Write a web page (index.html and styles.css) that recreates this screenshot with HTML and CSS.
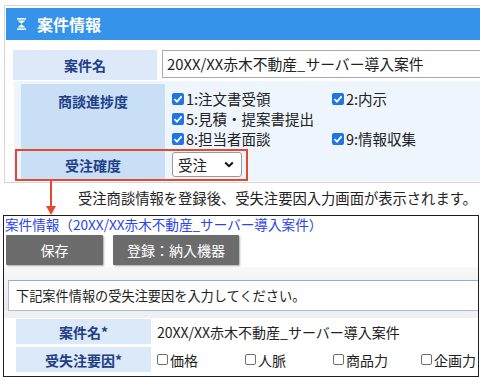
FILE: index.html
```html
<!DOCTYPE html>
<html lang="ja">
<head>
    <meta charset="UTF-8">
    <meta name="viewport" content="width=device-width, initial-scale=1.0">
    <title>受失注要因入力</title>
    <link rel="stylesheet" href="styles.css">
</head>
<body>

    <div class="case-panel">
        <div class="case-head">
            <svg class="collapse-icon" width="9" height="12" viewBox="0 0 9 12">
                <rect x="0" y="0" width="9" height="1.6" fill="#fff"/>
                <polygon points="0.5,2.6 8.5,2.6 4.5,5.8" fill="#fff"/>
                <polygon points="0.5,9.4 8.5,9.4 4.5,6.2" fill="#fff"/>
                <rect x="0" y="10.4" width="9" height="1.6" fill="#fff"/>
            </svg>
            <span>案件情報</span>
        </div>

        <div class="case-body">
            <div class="row row-name">
                <div class="label">案件名</div>
                <div class="text-input">20XX/XX赤木不動産_サーバー導入案件</div>
            </div>

            <div class="sub">
                <div class="row">
                    <div class="label label-dark label-top">商談進捗度</div>
                    <div class="checks">
                        <span class="check"><i class="box on"></i>1:注文書受領</span>
                        <span class="check"><i class="box on"></i>2:内示</span>
                        <span class="check wide"><i class="box on"></i>5:見積・提案書提出</span>
                        <span class="check"><i class="box on"></i>8:担当者面談</span>
                        <span class="check"><i class="box on"></i>9:情報収集</span>
                    </div>
                </div>
                <div class="row row-select">
                    <div class="label label-dark">受注確度</div>
                    <div class="select">
                        <span>受注</span>
                        <svg width="10" height="7" viewBox="0 0 10 7">
                            <polyline points="1.2,1.5 5,5.2 8.8,1.5" fill="none" stroke="#111" stroke-width="2"/>
                        </svg>
                    </div>
                </div>
            </div>
        </div>
    </div>

    <!-- annotation: highlight + arrow -->
    <div class="highlight"></div>
    <svg class="arrow" width="12" height="36" viewBox="0 0 12 36">
        <rect x="5" y="0" width="2" height="27" fill="#e2492f"/>
        <polygon points="1,25 11,25 6,34" fill="#e2492f"/>
    </svg>

    <p class="note">受注商談情報を登録後、受失注要因入力画面が表示されます。</p>

    <div class="loss-panel">
        <div class="loss-title">案件情報（20XX/XX赤木不動産_サーバー導入案件）</div>
        <div class="toolbar">
            <button class="tool-btn save-btn">保存</button>
            <button class="tool-btn">登録：納入機器</button>
        </div>
        <div class="loss-body">
            <div class="message">下記案件情報の受失注要因を入力してください。</div>
        </div>
        <div class="loss-gap"></div>
        <div class="loss-table">
            <div class="loss-row">
                <div class="loss-label">案件名*</div>
                <div class="loss-value">20XX/XX赤木不動産_サーバー導入案件</div>
            </div>
            <div class="loss-row">
                <div class="loss-label">受失注要因*</div>
                <div class="loss-value reasons">
                    <span class="reason"><i class="box off"></i>価格</span>
                    <span class="reason"><i class="box off"></i>人脈</span>
                    <span class="reason"><i class="box off"></i>商品力</span>
                    <span class="reason last"><i class="box off"></i>企画力</span>
                </div>
            </div>
        </div>
    </div>

</body>
</html>
```

FILE: styles.css
```css
body {
    margin: 0;
    width: 480px;
    height: 377px;
    overflow: hidden;
    background-color: #fff;
    font-family: "Noto Sans CJK JP", "Noto Sans", sans-serif;
    color: #222;
    position: relative;
}

/* top panel */
.case-panel {
    margin: 5px 0 0 4px;
    border: 1px solid #d6d6d6;
    border-right: none;
    padding: 2px 0 1px 1px;
}

.case-head {
    height: 32px;
    background-color: #3593ea;
    display: flex;
    align-items: center;
    color: #fff;
    font-size: 16px;
    font-weight: bold;
}

.collapse-icon {
    margin: 0 11px 0 11px;
}

.case-body {
    padding-top: 10px;
}

.row {
    display: flex;
}

.row-name {
    margin-left: 7px;
    height: 30px;
}

.label {
    flex: none;
    width: 144px;
    display: flex;
    align-items: center;
    justify-content: center;
    background-color: #dde9f8;
    color: #213e86;
    font-size: 14px;
    font-weight: bold;
}

.text-input {
    flex: 1;
    min-width: 0;
    margin-left: 5px;
    height: 28px;
    box-sizing: border-box;
    border: 1px solid #a9a9a9;
    border-right: none;
    padding-left: 4px;
    font-size: 14.8px;
    line-height: 26px;
    color: #222;
    background-color: #fff;
    white-space: nowrap;
    overflow: hidden;
}

.sub {
    margin: 1px 0 0 8px;
    padding: 3px 0 2px 7px;
    background-color: #eef5fd;
}

.label-dark {
    background-color: #c9dff6;
}

.label-top {
    align-items: flex-start;
    padding-top: 7px;
    height: 58px;
}

.checks {
    display: grid;
    grid-template-columns: 160px auto;
    padding: 5px 0 0 7px;
    font-size: 14.5px;
    line-height: 17.5px;
    color: #222;
}

.check {
    display: flex;
    align-items: center;
    white-space: nowrap;
}

.check.wide {
    grid-column: span 2;
}

.box {
    flex: none;
    width: 12px;
    height: 12px;
    box-sizing: border-box;
    border-radius: 2px;
    margin-right: 2px;
}

.box.on {
    background-color: #1f74e6;
    background-image: url("data:image/svg+xml,%3Csvg xmlns='http://www.w3.org/2000/svg' viewBox='0 0 12 12'%3E%3Cpolyline points='2.5,6.2 5,8.6 9.6,3.4' fill='none' stroke='white' stroke-width='1.8'/%3E%3C/svg%3E");
}

.box.off {
    width: 11px;
    height: 11px;
    border: 1px solid #6f6f6f;
    margin-right: 2px;
}

.row-select {
    margin-top: 1px;
    height: 29px;
    align-items: center;
}

.row-select .label {
    height: 29px;
}

.select {
    margin-left: 7px;
    width: 70px;
    height: 25px;
    box-sizing: border-box;
    border: 1px solid #9a9a9a;
    border-radius: 3px;
    background-color: #fff;
    display: flex;
    align-items: center;
    justify-content: space-between;
    padding: 0 7px 0 5px;
    font-size: 14.5px;
    color: #222;
}

/* annotation */
.highlight {
    position: absolute;
    left: 15px;
    top: 149px;
    width: 233px;
    height: 32px;
    box-sizing: border-box;
    border: 2px solid #e2492f;
}

.arrow {
    position: absolute;
    left: 45px;
    top: 181px;
}

.note {
    margin: 5px 0 7px 78px;
    font-size: 14.3px;
    line-height: 20px;
    color: #222;
    white-space: nowrap;
}

/* bottom panel */
.loss-panel {
    margin-left: 3px;
    width: 476px;
    height: 162px;
    box-sizing: border-box;
    border: 1px solid #1e1e1e;
    overflow: hidden;
}

.loss-title {
    height: 19px;
    padding-left: 1px;
    font-size: 13.6px;
    line-height: 16px;
    color: #2b44ec;
    white-space: nowrap;
}

.toolbar {
    display: flex;
    gap: 10px;
    padding-left: 2px;
}

.tool-btn {
    height: 30px;
    border: none;
    border-radius: 1px;
    background-color: #6c6c6c;
    color: #fff;
    font-family: inherit;
    font-size: 14px;
    padding: 0 14px;
    box-shadow: 1px 1px 2px rgba(0, 0, 0, 0.35);
}

.save-btn {
    width: 97px;
}

.loss-body {
    margin-top: 2px;
    padding-top: 13px;
    background: linear-gradient(#f8f8f8, #e6e8ec);
}

.message {
    margin-left: 4px;
    height: 31px;
    box-sizing: border-box;
    border-top: 1px solid #8eaee0;
    border-left: 1px solid #a8bcd8;
    border-bottom: 1px solid #a8bcd8;
    background-color: #fff;
    padding-left: 7px;
    font-size: 13.2px;
    line-height: 29px;
}

.loss-gap {
    height: 7px;
    background-color: #eef0f3;
}

.loss-table {
    padding: 1px 0 0 12px;
    display: flex;
    flex-direction: column;
    gap: 3px;
}

.loss-row {
    display: flex;
    height: 25px;
}

.loss-label {
    flex: none;
    width: 135px;
    display: flex;
    align-items: center;
    justify-content: center;
    background-color: #dce9f9;
    color: #223f84;
    font-size: 14px;
    font-weight: bold;
}

.loss-value {
    margin-left: 6px;
    display: flex;
    align-items: center;
    font-size: 14px;
    white-space: nowrap;
}

.reason {
    width: 88px;
    display: flex;
    align-items: center;
}

.reason.last {
    width: auto;
}
```
